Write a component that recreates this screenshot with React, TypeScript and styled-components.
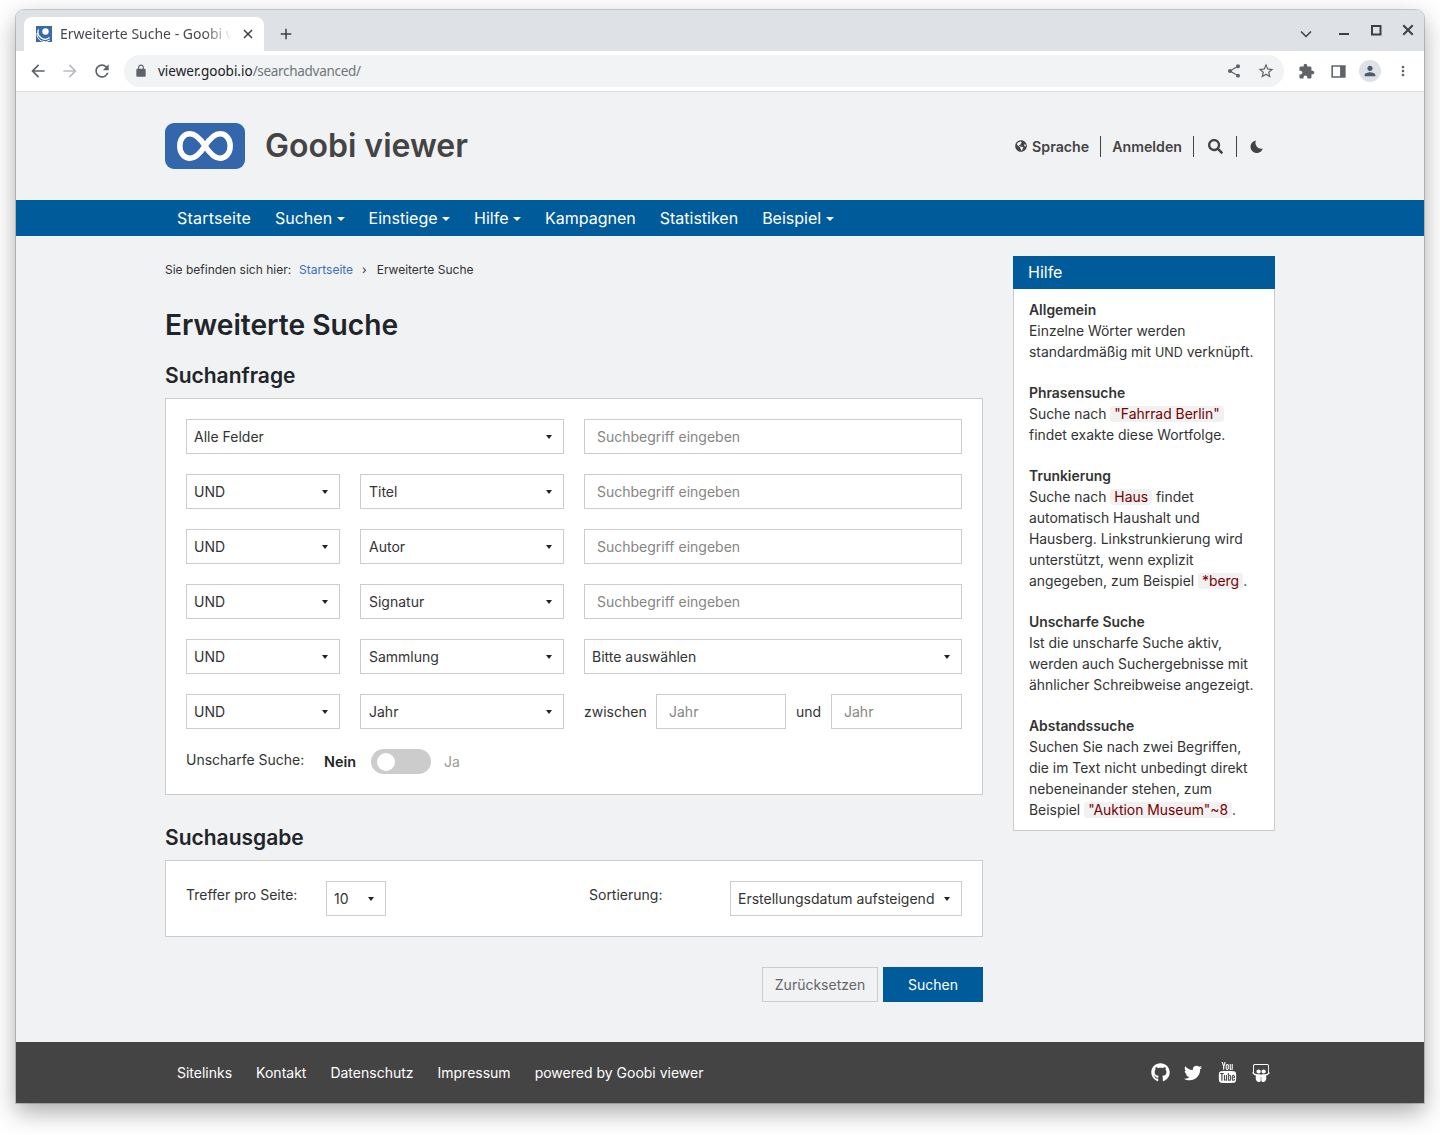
import React from 'react';
import styled, { createGlobalStyle } from 'styled-components';
import { FaGithub, FaTwitter, FaSlideshare, FaSearch, FaGlobeAmericas } from 'react-icons/fa';
import { TfiYoutube } from 'react-icons/tfi';

const Global = createGlobalStyle`
  html, body { margin: 0; padding: 0; background: #fff; }
  body { font-family: Inter, "Liberation Sans", sans-serif; font-size: 14px; color: #333; }
  * { box-sizing: border-box; }
`;

const Stage = styled.div`
  height: 1135px;
  padding: 10px 16px 32px;
  overflow: hidden;
`;
const Win = styled.div`
  height: 1093px;
  border-radius: 8px 8px 0 0;
  background: #f1f2f4;
  box-shadow: 0 0 0 1px rgba(0,0,0,.18), 0 9px 24px rgba(0,0,0,.34);
  overflow: hidden;
  display: flex;
  flex-direction: column;
`;
const TabStrip = styled.div`
  height: 41px;
  background: #dee1e6;
  display: flex;
  align-items: flex-end;
  padding-left: 8px;
`;
const Tab = styled.div`
  width: 240px;
  height: 34px;
  background: #fff;
  border-radius: 8px 8px 0 0;
  display: flex;
  align-items: center;
  padding: 0 8px 0 12px;
  gap: 8px;
  font-family: "Noto Sans", sans-serif;
  font-size: 14px;
  color: #45494e;
`;
const TabTitle = styled.span`
  flex: 1;
  white-space: nowrap;
  overflow: hidden;
  line-height: 33px;
  height: 34px;
  -webkit-mask-image: linear-gradient(90deg, #000 84%, transparent 100%);
  mask-image: linear-gradient(90deg, #000 84%, transparent 100%);
`;
const NewTab = styled.div`
  width: 44px;
  height: 34px;
  display: flex;
  align-items: center;
  justify-content: center;
`;
const Spacer = styled.div`flex: 1;`;
const WinControls = styled.div`
  display: flex;
  align-items: flex-start;
  align-self: stretch;
  padding-top: 12px;
`;
const WinBtn = styled.div<{ $ml?: number }>`
  width: 32px;
  height: 16px;
  margin-left: ${p => p.$ml ?? 0}px;
  display: flex;
  justify-content: center;
`;
const Toolbar = styled.div`
  height: 41px;
  background: #fff;
  border-bottom: 1px solid #dadce0;
  display: flex;
  align-items: flex-start;
  padding: 4px 0 0 6px;
`;
const NavIcon = styled.div<{ $w?: number; $ml?: number }>`
  width: ${p => p.$w ?? 32}px;
  margin-left: ${p => p.$ml ?? 0}px;
  height: 32px;
  display: flex;
  align-items: center;
  justify-content: center;
  flex: none;
`;
const Omnibox = styled.div`
  width: 1160px;
  margin-left: 6px;
  height: 32px;
  border-radius: 16px;
  background: #f1f3f4;
  display: flex;
  align-items: center;
  padding: 0 2px 0 10px;
  font-family: "Noto Sans", sans-serif;
  font-size: 13.5px;
  color: #70757a;
`;
const Host = styled.span`color: #202124;`;
const UrlPath = styled.span`letter-spacing: -.3px;`;
const UrlText = styled.div`flex: 1; margin-left: 10px;`;
const Avatar = styled.div`
  width: 22px; height: 22px; border-radius: 50%; background: #dee1e6;
  display: flex; align-items: center; justify-content: center;
`;

const Header = styled.header`
  width: 1110px;
  margin: 31px auto 0;
  height: 46px;
  display: flex;
  align-items: center;
`;
const Brand = styled.div`
  margin-left: 20px;
  padding-bottom: 2px;
  font-size: 32px;
  font-weight: 600;
  color: #444;
`;
const HeaderLinks = styled.div`
  margin-left: auto;
  margin-right: 12px;
  display: flex;
  align-items: center;
  font-weight: 600;
  font-size: 14.2px;
  color: #444;
`;
const HeaderItem = styled.div<{ $sep?: boolean; $pl?: number; $pr?: number }>`
  display: flex;
  align-items: center;
  gap: 5px;
  height: 21px;
  padding: 0 ${p => p.$pr ?? 11}px 0 ${p => p.$pl ?? 11}px;
  border-left: ${p => (p.$sep ? '1px solid #444' : 'none')};
`;
const NavBar = styled.nav`
  margin-top: 31px;
  height: 36px;
  background: #005b9a;
  flex: none;
`;
const NavInner = styled.div`
  width: 1110px;
  margin: 0 auto;
  height: 100%;
  display: flex;
  align-items: center;
  padding-left: 12px;
  gap: 24px;
  color: #fff;
  font-size: 16px;
`;
const HomeLink = styled.span`letter-spacing: .2px;`;
const Caret = styled.span`
  display: inline-block;
  margin-left: 4.5px;
  vertical-align: 3px;
  border-top: 4px solid currentColor;
  border-left: 4px solid transparent;
  border-right: 4px solid transparent;
`;
const Content = styled.div`
  width: 1110px;
  margin: 0 auto;
  padding-top: 20px;
  display: grid;
  grid-template-columns: 818px 262px;
  column-gap: 30px;
  align-items: start;
`;
const Crumbs = styled.div`
  font-size: 12px;
  line-height: 18px;
  height: 18px;
  margin-top: 5px;
  display: flex;
  color: #333;
`;
const CrumbLink = styled.span`color: #3b70b8; margin-left: 8px;`;
const CrumbSep = styled.span`margin: 0 10px 0 9px;`;
const H1 = styled.h1`
  margin: 27px 0 0;
  font-size: 28.2px;
  line-height: 38px;
  font-weight: 600;
  color: #212529;
`;
const H2 = styled.h2<{ $mt: number }>`
  margin: ${p => p.$mt}px 0 8px;
  font-size: 21px;
  line-height: 28px;
  font-weight: 600;
  color: #212529;
`;
const Panel = styled.div`
  background: #fff;
  border: 1px solid #ccc;
  padding: 20px;
`;
const Row = styled.div<{ $cols: string }>`
  display: grid;
  grid-template-columns: ${p => p.$cols};
  column-gap: 20px;
  margin-bottom: 20px;
  height: 35px;
`;
const SelectBox = styled.div<{ $pl?: number }>`
  height: 35px;
  border: 1px solid #ccc;
  background: #fff;
  display: flex;
  align-items: center;
  justify-content: space-between;
  padding: 0 11px 0 ${p => p.$pl ?? 7}px;
  color: #333;
`;
const SelectBoxSmall = styled(SelectBox)`
  width: 60px;
  flex: none;
`;
const SelectBoxWide = styled(SelectBox)`
  width: 232px;
  flex: none;
`;
const SelCaret = styled.span`
  border-top: 4px solid #222;
  border-left: 3.5px solid transparent;
  border-right: 3.5px solid transparent;
`;
const InputBox = styled.div`
  height: 35px;
  border: 1px solid #ccc;
  background: #fff;
  display: flex;
  align-items: center;
  padding: 0 12px;
  color: #858585;
  min-width: 0;
`;
const YearRow = styled.div`
  display: flex;
  align-items: center;
`;
const YearLabel = styled.span<{ $w: number; $pl?: number }>`
  width: ${p => p.$w}px;
  padding-left: ${p => p.$pl ?? 0}px;
  flex: none;
`;
const YearInput = styled(InputBox)<{ $w: number }>`
  width: ${p => p.$w}px;
  flex: none;
`;
const FuzzyRow = styled.div`
  display: flex;
  align-items: center;
  height: 25px;
`;
const FuzzyLabel = styled.span`
  width: 138px;
  position: relative;
  top: -2px;
`;
const Nein = styled.span`
  width: 47px;
  font-size: 14.4px;
  font-weight: 600;
  color: #212529;
`;
const Toggle = styled.div`
  width: 60px;
  height: 25px;
  background: #ccc;
  border-radius: 13px;
  padding: 3.5px 6px;
`;
const Knob = styled.div`
  width: 18px;
  height: 18px;
  border-radius: 50%;
  background: #fff;
`;
const Ja = styled.span`margin-left: 13px; color: #999;`;
const OutputPanel = styled(Panel)`
  display: flex;
  height: 77px;
`;
const OutLabel = styled.span<{ $w: number; $ml?: number }>`
  width: ${p => p.$w}px;
  margin-left: ${p => p.$ml ?? 0}px;
  flex: none;
  line-height: 27px;
`;
const Actions = styled.div`
  margin-top: 30px;
  display: flex;
  justify-content: flex-end;
  gap: 5px;
`;
const Btn = styled.div<{ $primary?: boolean; $w: number }>`
  width: ${p => p.$w}px;
  height: 35px;
  display: flex;
  align-items: center;
  justify-content: center;
  border: 1px solid ${p => (p.$primary ? '#005b9a' : '#ccc')};
  background: ${p => (p.$primary ? '#005b9a' : 'transparent')};
  color: ${p => (p.$primary ? '#fff' : '#666')};
`;
const Help = styled.aside``;
const HelpHead = styled.div`
  height: 33px;
  background: #005b9a;
  color: #fff;
  font-size: 16px;
  display: flex;
  align-items: center;
  padding: 0 0 1px 15px;
`;
const HelpBody = styled.div`
  background: #fff;
  border: 1px solid #ccc;
  border-top: 0;
  padding: 11px 15px 0;
  font-size: 13.9px;
  line-height: 21px;
  height: 542px;
  color: #333;
`;
const HelpSection = styled.div`
  margin-bottom: 20px;
  white-space: nowrap;
`;
const HelpTitle = styled.div`
  font-weight: 600;
  color: #333;
`;
const Code = styled.code`
  font-family: inherit;
  background: #f1f1f1;
  color: #770000;
  border-radius: 3px;
  padding: 0 4px;
`;
const Abbr = styled.span`font-size: 12.5px;`;
const Footer = styled.footer`
  margin-top: auto;
  height: 61px;
  background: #444;
  flex: none;
`;
const FooterInner = styled.div`
  width: 1110px;
  height: 100%;
  margin: 0 auto;
  display: flex;
  align-items: center;
  padding-left: 12px;
  gap: 24px;
  color: #fff;
`;
const Socials = styled.div`
  margin-left: auto;
  margin-right: 5px;
  display: flex;
  align-items: center;
  gap: 14.5px;
  color: #fff;
`;

const M = ({ d, s = 24, c = '#5f6368' }: { d: string; s?: number; c?: string }) => (
  <svg width={s} height={s} viewBox="0 0 24 24" fill={c}><path d={d} /></svg>
);

const Ctl = ({ d, sw = 2 }: { d: string; sw?: number }) => (
  <svg width="16" height="16" viewBox="0 0 16 16" fill="none" stroke="#3c4043" strokeWidth={sw}><path d={d} /></svg>
);

const Moon = () => (
  <svg width="13" height="13" viewBox="0 0 13 13" fill="#444">
    <path d="M6 .5A6.300 6.300 0 1 0 12.800 8.500 5.800 5.800 0 0 1 6 .5Z" />
  </svg>
);

const Logo = () => (
  <svg width="80" height="46" viewBox="0 0 80 46">
    <rect width="80" height="46" rx="9" fill="#3366aa" />
    <path d="M40 23C34.500 14.500 30 10.800 25 10.800 19 10.800 14.800 16 14.800 23 14.800 30 19 35.200 25 35.200 30 35.200 34.500 31.500 40 23 45.500 14.500 50 10.800 55 10.800 61 10.800 65.200 16 65.200 23 65.200 30 61 35.200 55 35.200 50 35.200 45.500 31.500 40 23Z" fill="none" stroke="#fff" strokeWidth="5.500" />
  </svg>
);

const Favicon = () => (
  <svg width="16" height="16" viewBox="0 0 16 16">
    <rect width="16" height="16" fill="#3a69a8" />
    <circle cx="9.500" cy="5.500" r="3.200" fill="#fff" />
    <path d="M2.500 3.500a7 7 0 0 0 11 8" fill="none" stroke="#fff" strokeWidth="1.300" />
    <path d="M1 7a8 8 0 0 0 13 7" fill="none" stroke="#fff" strokeWidth="1" />
  </svg>
);

const Sel = ({ children, pl }: { children: React.ReactNode; pl?: number }) => (
  <SelectBox $pl={pl}>{children}<SelCaret /></SelectBox>
);

const PH = 'Suchbegriff eingeben';
const rows3 = '154px 204px 378px';

export default function App() {
  return (
    <Stage>
      <Global />
      <Win>
        <TabStrip>
          <Tab>
            <Favicon />
            <TabTitle>Erweiterte Suche - Goobi viewer</TabTitle>
            <Ctl d="M4 4l8 8m0-8l-8 8" sw={1.500} />
          </Tab>
          <NewTab><M s={18} c="#3c4043" d="M19 13h-6v6h-2v-6H5v-2h6V5h2v6h6v2z" /></NewTab>
          <Spacer />
          <WinControls>
            <WinBtn><Ctl d="M3 9.500l5 5 5-5" sw={1.500} /></WinBtn>
            <WinBtn $ml={6}><Ctl d="M3 12h10" /></WinBtn>
            <WinBtn><Ctl d="M4 4h8.500v8.500H4z" /></WinBtn>
            <WinBtn><Ctl d="M3.300 3.300l9.400 9.400m0-9.400l-9.400 9.400" /></WinBtn>
          </WinControls>
        </TabStrip>
        <Toolbar>
          <NavIcon><M s={20} d="M20 11H7.830l5.590-5.590L12 4l-8 8 8 8 1.410-1.410L7.830 13H20v-2z" /></NavIcon>
          <NavIcon><M s={20} c="#b9bcc0" d="M4 11h12.170l-5.590-5.590L12 4l8 8-8 8-1.410-1.410L16.170 13H4v-2z" /></NavIcon>
          <NavIcon><M s={20} d="M17.650 6.350A7.958 7.958 0 0 0 12 4c-4.420 0-7.990 3.580-7.990 8s3.570 8 7.990 8c3.730 0 6.840-2.550 7.730-6h-2.080A5.990 5.990 0 0 1 12 18c-3.310 0-6-2.690-6-6s2.690-6 6-6c1.660 0 3.140.690 4.220 1.780L13 11h7V4l-2.350 2.350z" /></NavIcon>
          <Omnibox>
            <M s={14} d="M18 8h-1V6c0-2.760-2.240-5-5-5S7 3.240 7 6v2H6c-1.100 0-2 .9-2 2v10c0 1.100.9 2 2 2h12c1.100 0 2-.9 2-2V10c0-1.100-.9-2-2-2zM9 6c0-1.660 1.340-3 3-3s3 1.340 3 3v2H9V6z" />
            <UrlText><Host>viewer.goobi.io</Host><UrlPath>/searchadvanced/</UrlPath></UrlText>
            <NavIcon><M s={16} d="M18 16.080c-.76 0-1.440.3-1.960.77L8.910 12.700c.05-.23.09-.46.09-.7s-.04-.47-.09-.7l7.050-4.110c.54.5 1.250.81 2.040.81 1.660 0 3-1.340 3-3s-1.340-3-3-3-3 1.340-3 3c0 .24.04.47.09.7L8.040 9.810C7.500 9.310 6.790 9 6 9c-1.660 0-3 1.340-3 3s1.340 3 3 3c.79 0 1.500-.31 2.040-.81l7.120 4.160c-.05.21-.08.43-.08.65 0 1.610 1.310 2.920 2.920 2.920s2.920-1.310 2.920-2.920-1.310-2.920-2.920-2.920z" /></NavIcon>
            <NavIcon><M s={18} d="M22 9.240l-7.190-.62L12 2 9.190 8.630 2 9.240l5.460 4.730L5.820 21 12 17.270 18.180 21l-1.630-7.030L22 9.240zM12 15.400l-3.760 2.270 1-4.280-3.320-2.880 4.380-.38L12 6.100l1.710 4.040 4.380.38-3.320 2.880 1 4.280L12 15.400z" /></NavIcon>
          </Omnibox>
          <NavIcon $ml={6}><M s={17} d="M20.500 11H19V7c0-1.100-.9-2-2-2h-4V3.500C13 2.120 11.880 1 10.500 1S8 2.120 8 3.500V5H4c-1.100 0-1.990.9-1.990 2v3.800H3.500c1.490 0 2.700 1.210 2.700 2.700s-1.210 2.700-2.700 2.700H2V20c0 1.100.9 2 2 2h3.800v-1.500c0-1.490 1.210-2.700 2.700-2.700 1.490 0 2.700 1.210 2.700 2.700V22H17c1.100 0 2-.9 2-2v-4h1.500c1.380 0 2.500-1.120 2.500-2.500S21.880 11 20.500 11z" /></NavIcon>
          <NavIcon><M s={19} d="M3 4h18v16H3zm2 2v12h9V6z" /></NavIcon>
          <NavIcon><Avatar><M s={16} c="#4c5a70" d="M12 12c2.210 0 4-1.790 4-4s-1.790-4-4-4-4 1.790-4 4 1.790 4 4 4zm0 2c-2.670 0-8 1.340-8 4v2h16v-2c0-2.660-5.330-4-8-4z" /></Avatar></NavIcon>
          <NavIcon $w={34}><M s={16} d="M12 8c1.100 0 2-.9 2-2s-.9-2-2-2-2 .9-2 2 .9 2 2 2zm0 2c-1.100 0-2 .9-2 2s.9 2 2 2 2-.9 2-2-.9-2-2-2zm0 6c-1.100 0-2 .9-2 2s.9 2 2 2 2-.9 2-2-.9-2-2-2z" /></NavIcon>
        </Toolbar>

        <Header>
          <Logo />
          <Brand>Goobi viewer</Brand>
          <HeaderLinks>
            <HeaderItem><FaGlobeAmericas size={12} /> Sprache</HeaderItem>
            <HeaderItem $sep>Anmelden</HeaderItem>
            <HeaderItem $sep $pl={14} $pr={13}><FaSearch size={15} /></HeaderItem>
            <HeaderItem $sep $pl={13} $pr={0}><Moon /></HeaderItem>
          </HeaderLinks>
        </Header>
        <NavBar>
          <NavInner>
            <HomeLink>Startseite</HomeLink>
            <span>Suchen<Caret /></span>
            <span>Einstiege<Caret /></span>
            <span>Hilfe<Caret /></span>
            <span>Kampagnen</span>
            <span>Statistiken</span>
            <span>Beispiel<Caret /></span>
          </NavInner>
        </NavBar>
        <Content>
          <main>
            <Crumbs>Sie befinden sich hier:<CrumbLink>Startseite</CrumbLink><CrumbSep>›</CrumbSep>Erweiterte Suche</Crumbs>
            <H1>Erweiterte Suche</H1>
            <H2 $mt={18}>Suchanfrage</H2>
            <Panel>
              <Row $cols="378px 378px"><Sel>Alle Felder</Sel><InputBox>{PH}</InputBox></Row>
              <Row $cols={rows3}><Sel>UND</Sel><Sel pl={8}>Titel</Sel><InputBox>{PH}</InputBox></Row>
              <Row $cols={rows3}><Sel>UND</Sel><Sel pl={8}>Autor</Sel><InputBox>{PH}</InputBox></Row>
              <Row $cols={rows3}><Sel>UND</Sel><Sel pl={8}>Signatur</Sel><InputBox>{PH}</InputBox></Row>
              <Row $cols={rows3}><Sel>UND</Sel><Sel pl={8}>Sammlung</Sel><Sel>Bitte auswählen</Sel></Row>
              <Row $cols={rows3}>
                <Sel>UND</Sel><Sel pl={8}>Jahr</Sel>
                <YearRow>
                  <YearLabel $w={72}>zwischen</YearLabel>
                  <YearInput $w={130}>Jahr</YearInput>
                  <YearLabel $w={45} $pl={10}>und</YearLabel>
                  <YearInput $w={131}>Jahr</YearInput>
                </YearRow>
              </Row>
              <FuzzyRow>
                <FuzzyLabel>Unscharfe Suche:</FuzzyLabel>
                <Nein>Nein</Nein>
                <Toggle><Knob /></Toggle>
                <Ja>Ja</Ja>
              </FuzzyRow>
            </Panel>
            <H2 $mt={29}>Suchausgabe</H2>
            <OutputPanel>
              <OutLabel $w={140}>Treffer pro Seite:</OutLabel>
              <SelectBoxSmall>10<SelCaret /></SelectBoxSmall>
              <OutLabel $w={141} $ml={203}>Sortierung:</OutLabel>
              <SelectBoxWide>Erstellungsdatum aufsteigend<SelCaret /></SelectBoxWide>
            </OutputPanel>
            <Actions>
              <Btn $w={116}>Zurücksetzen</Btn>
              <Btn $primary $w={100}>Suchen</Btn>
            </Actions>
          </main>
          <Help>
            <HelpHead>Hilfe</HelpHead>
            <HelpBody>
              <HelpSection><HelpTitle>Allgemein</HelpTitle>Einzelne Wörter werden<br />standardmäßig mit <Abbr>UND</Abbr> verknüpft.</HelpSection>
              <HelpSection><HelpTitle>Phrasensuche</HelpTitle>Suche nach <Code>"Fahrrad Berlin"</Code><br />findet exakte diese Wortfolge.</HelpSection>
              <HelpSection><HelpTitle>Trunkierung</HelpTitle>Suche nach <Code>Haus</Code> findet<br />automatisch Haushalt und<br />Hausberg. Linkstrunkierung wird<br />unterstützt, wenn explizit<br />angegeben, zum Beispiel <Code>*berg</Code>.</HelpSection>
              <HelpSection><HelpTitle>Unscharfe Suche</HelpTitle>Ist die unscharfe Suche aktiv,<br />werden auch Suchergebnisse mit<br />ähnlicher Schreibweise angezeigt.</HelpSection>
              <HelpSection><HelpTitle>Abstandssuche</HelpTitle>Suchen Sie nach zwei Begriffen,<br />die im Text nicht unbedingt direkt<br />nebeneinander stehen, zum<br />Beispiel <Code>"Auktion Museum"~8</Code>.</HelpSection>
            </HelpBody>
          </Help>
        </Content>
        <Footer>
          <FooterInner>
            <span>Sitelinks</span><span>Kontakt</span><span>Datenschutz</span><span>Impressum</span><span>powered by Goobi viewer</span>
            <Socials><FaGithub size={19} /><FaTwitter size={18} /><TfiYoutube size={21} /><FaSlideshare size={18} /></Socials>
          </FooterInner>
        </Footer>
      </Win>
    </Stage>
  );
}
